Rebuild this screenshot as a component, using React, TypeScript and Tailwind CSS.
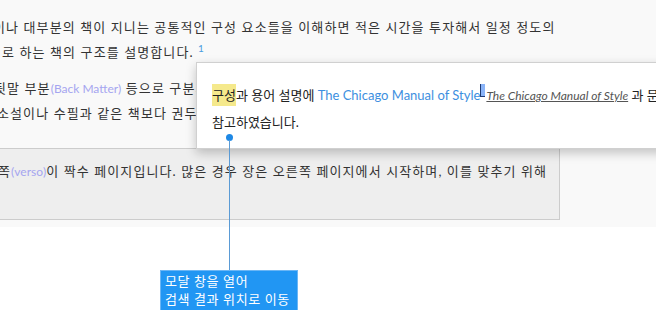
const KR = { fontFamily: '"Lato", "Noto Sans CJK KR", sans-serif' };

export default function App() {
  return (
    <div
      className="relative w-[656px] h-[310px] overflow-hidden bg-white text-[13px] text-[#333333]"
      style={KR}
    >
      <section className="bg-[#f9f9f9] pb-[7px] tracking-[1.1px]">
        <div className="h-[148px] pt-[15px] leading-[25px] whitespace-nowrap">
          <p className="-ml-[7px]">
            이나 대부분의 책이 지니는 공통적인 구성 요소들을 이해하면 적은 시간을 투자해서 일정 정도의
          </p>
          <p className="ml-[2px]">
            로 하는 책의 구조를 설명합니다.{" "}
            <sup className="text-[10px] text-[#4a9de0]">1</sup>
          </p>
          <p className="mt-[11px] -ml-[6px]">
            뒷말 부분<span className="text-[12px] tracking-normal text-[#a5a5f0]">(Back Matter)</span> 등으로 구분되는 책의 구성은
          </p>
          <p className="-ml-[3px]">소설이나 수필과 같은 책보다 권두와 권말이 더 풍부한 편입니다.</p>
        </div>
        <div className="w-[560px] h-[72px] bg-[#eeeeee] border-t border-b border-r border-[#cccccc] pt-[10px] leading-[25px] whitespace-nowrap">
          <p className="-ml-[2px]">
            쪽<span className="text-[12px] tracking-normal text-[#a5a5f0]">(verso)</span>이 짝수 페이지입니다. 많은 경우 장은 오른쪽 페이지에서 시작하며, 이를 맞추기 위해
          </p>
        </div>
      </section>

      {/* footnote popup */}
      <div className="absolute left-[196px] top-[62px] w-[520px] bg-white border border-[#d0d0d0] shadow-[0_4px_10px_rgba(0,0,0,0.22)] pl-[15px] pt-[19px] pb-[13px] leading-[26px] text-[#222222] whitespace-nowrap">
        <p>
          <span className="bg-[#f5e98c] py-[3px]">구성</span>과 용어 설명에{" "}
          <span className="text-[#3d8fe0]">The Chicago Manual of Style</span>
          <span className="inline-block align-[3px] w-[5px] h-[13px] bg-[#8ab4f8] border-l border-b border-[#1f3b73]" />
          <span className="italic underline text-[#555555] text-[12px] ml-[1px]">The Chicago Manual of Style</span> 과 문헌을
        </p>
        <p>참고하였습니다.</p>
      </div>

      {/* callout */}
      <div className="absolute left-[226px] top-[134px] w-[7px] h-[7px] rounded-full bg-[#1e88e5]" />
      <div className="absolute left-[229px] top-[140px] w-px h-[130px] bg-[#5b9bd5]" />
      <div className="absolute left-[160px] top-[270px] w-[138px] h-[44px] bg-[#2196f3] border border-[#6bb6f5] px-[4px] pt-[1px] text-white text-[13px] leading-[18px] tracking-[0.6px] whitespace-nowrap">
        <p>모달 창을 열어</p>
        <p>검색 결과 위치로 이동</p>
      </div>
    </div>
  );
}
